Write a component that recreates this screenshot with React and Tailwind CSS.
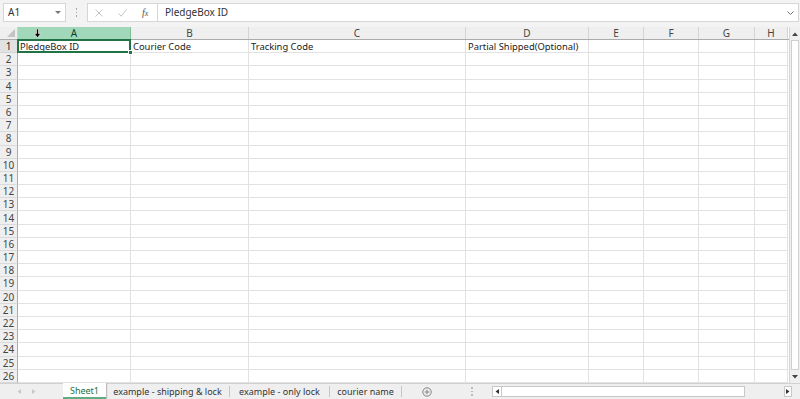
import React from 'react';

const cols = [
  { id: 'A', w: 113 },
  { id: 'B', w: 118 },
  { id: 'C', w: 217 },
  { id: 'D', w: 123 },
  { id: 'E', w: 55 },
  { id: 'F', w: 55 },
  { id: 'G', w: 56 },
  { id: 'H', w: 33 },
];

const firstRow = ['PledgeBox ID', 'Courier Code', 'Tracking Code', 'Partial Shipped(Optional)', '', '', '', ''];

const rows = Array.from({ length: 26 }, (_, i) => i + 1);

const tabs = [
  { name: 'example - shipping & lock', w: 124 },
  { name: 'example - only lock', w: 100 },
  { name: 'courier name', w: 72 },
];

const FormulaBar = () => (
  <div className="h-[27px] flex items-start pt-[3px] bg-[#f3f3f3] shrink-0">
    {/* Name box */}
    <div className="ml-[3px] w-[63px] h-[19px] bg-white border border-[#d6d6d6] flex items-center justify-between px-[4px]">
      <span className="text-[10px] text-[#333]">A1</span>
      <svg width="6" height="4" viewBox="0 0 6 4"><path d="M0 0h6L3 3z" fill="#777" /></svg>
    </div>
    <div className="w-[21px] h-[19px] flex flex-col items-center justify-center gap-[2px]">
      <span className="w-[1.5px] h-[1.5px] bg-[#aaa]" />
      <span className="w-[1.5px] h-[1.5px] bg-[#aaa]" />
      <span className="w-[1.5px] h-[1.5px] bg-[#aaa]" />
    </div>
    {/* Cancel / enter / fx */}
    <div className="w-[71px] h-[19px] bg-white border border-[#d6d6d6] flex items-center pl-[7px]">
      <svg width="8" height="8" viewBox="0 0 8 8" className="mr-[15px]">
        <path d="M0.5 0.5L7.5 7.5M7.5 0.5L0.5 7.5" stroke="#c4c4c4" strokeWidth="1" />
      </svg>
      <svg width="9" height="8" viewBox="0 0 9 8" className="mr-[15px]">
        <path d="M0.5 4.5L3.2 7.2L8.5 0.5" stroke="#c4c4c4" strokeWidth="1" fill="none" />
      </svg>
      <span className="italic text-[10px] text-[#555] font-['Liberation_Serif',serif]">f<span className="text-[8px]">x</span></span>
    </div>
    {/* Formula input */}
    <div className="flex-1 h-[19px] bg-white border border-l-0 border-[#d6d6d6] flex items-center justify-between pl-[7px] pr-[4px] mr-[1px]">
      <span className="text-[10px] text-[#333]">PledgeBox ID</span>
      <svg width="7" height="4" viewBox="0 0 7 4"><path d="M0.5 0.5L3.5 3.5L6.5 0.5" stroke="#777" fill="none" /></svg>
    </div>
  </div>
);

const HeaderRow = () => (
  <div className="h-[13px] flex shrink-0 border-b border-[#ababab]">
    <div className="w-[18px] h-full bg-[#efefef] border-r border-[#d0d0d0] flex items-end justify-end p-[2px]">
      <svg width="8" height="8" viewBox="0 0 8 8"><path d="M8 0V8H0z" fill="#c4c4c4" /></svg>
    </div>
    {cols.map((c) => (
      <div
        key={c.id}
        style={{ width: c.w }}
        className={`h-full shrink-0 flex items-center justify-center text-[10px] leading-none relative ${
          c.id === 'A'
            ? 'bg-[#a0d8b9] text-[#0f3e26] border-r border-[#7fbf9a]'
            : 'bg-[#efefef] text-[#444] border-r border-[#d4d4d4]'
        }`}
      >
        {c.id}
        {c.id === 'A' && (
          <svg width="7" height="9" viewBox="0 0 7 9" className="absolute left-[16px] top-[2px]">
            <path d="M2.5 0h2v4.5h2.2L3.5 8.8L0.3 4.5h2.2z" fill="#000" stroke="#fff" strokeWidth="0.6" />
          </svg>
        )}
      </div>
    ))}
  </div>
);

const Grid = () => (
  <div className="flex-1 flex flex-col bg-white min-w-0">
    <HeaderRow />
    {rows.map((r) => (
      <div key={r} className="h-[13.2px] flex shrink-0">
        <div
          className={`w-[18px] h-full shrink-0 flex items-center justify-center text-[10px] leading-none border-r border-b ${
            r === 1 ? 'bg-[#e2e2e2] text-[#222] border-r-[#ababab] border-b-[#d4d4d4]' : 'bg-[#efefef] text-[#444] border-r-[#ababab] border-b-[#dadada]'
          }`}
        >
          {r}
        </div>
        {cols.map((c, ci) => (
          <div
            key={c.id}
            style={{ width: c.w }}
            className="h-full shrink-0 border-r border-b border-[#e2e2e2] flex items-center text-[9.4px] text-[#222] relative"
          >
            <span className="px-[2px] pt-[1px] leading-[12px] whitespace-nowrap">{r === 1 ? firstRow[ci] : ''}</span>
            {r === 1 && ci === 0 && (
              <>
                <div className="absolute left-[-1px] top-[-1px] right-[-1px] bottom-[-1px] border-2 border-[#217346] pointer-events-none z-10" />
                <div className="absolute right-[-3px] bottom-[-3px] w-[5px] h-[5px] bg-[#217346] border border-white z-10" />
              </>
            )}
          </div>
        ))}
      </div>
    ))}
  </div>
);

const VScroll = () => (
  <div className="w-[11px] shrink-0 bg-[#f0f0f0] border-l border-[#d4d4d4] flex flex-col items-center">
    <div className="h-[13px] w-full flex items-center justify-center">
      <svg width="6" height="4" viewBox="0 0 6 4"><path d="M0 4h6L3 0.5z" fill="#444" /></svg>
    </div>
    <div className="flex-1 w-[8px] bg-white border border-[#cfcfcf]" />
    <div className="h-[13px] w-full flex items-center justify-center">
      <svg width="6" height="4" viewBox="0 0 6 4"><path d="M0 0h6L3 3.5z" fill="#444" /></svg>
    </div>
  </div>
);

const TabBar = () => (
  <div className="h-[16px] shrink-0 bg-[#efefef] border-t border-[#d0d0d0] flex items-stretch text-[9px] leading-none whitespace-nowrap">
    <div className="w-[63px] shrink-0 flex items-center pl-[17px] gap-[11px]">
      <svg width="4" height="5" viewBox="0 0 4 5"><path d="M4 0V5L0.5 2.5z" fill="#c8c8c8" /></svg>
      <svg width="4" height="5" viewBox="0 0 4 5"><path d="M0 0V5L3.5 2.5z" fill="#c8c8c8" /></svg>
    </div>
    <div className="w-[43px] shrink-0 bg-white flex items-center justify-center text-[#217346] border-b-2 border-[#5fae82] mt-[-1px] shadow-[1px_0_1px_#bbb]">
      Sheet1
    </div>
    {tabs.map((t) => (
      <div key={t.name} style={{ width: t.w }} className="shrink-0 flex items-center justify-center text-[#333] border-r border-[#c6c6c6] my-[2px]">
        {t.name}
      </div>
    ))}
    <div className="w-[50px] shrink-0 flex items-center justify-center">
      <svg width="10" height="10" viewBox="0 0 10 10">
        <circle cx="5" cy="5" r="4.2" stroke="#777" fill="none" strokeWidth="0.9" />
        <path d="M5 2.7V7.3M2.7 5H7.3" stroke="#777" strokeWidth="0.9" />
      </svg>
    </div>
    <div className="w-[40px] shrink-0 flex flex-col items-center justify-center gap-[2px]">
      <span className="w-[1.5px] h-[1.5px] bg-[#bbb]" />
      <span className="w-[1.5px] h-[1.5px] bg-[#bbb]" />
      <span className="w-[1.5px] h-[1.5px] bg-[#bbb]" />
    </div>
    <div className="flex items-center shrink-0">
      <div className="w-[10px] h-[11px] bg-white border border-[#c8c8c8] flex items-center justify-center">
        <svg width="4" height="5" viewBox="0 0 4 5"><path d="M4 0V5L0.5 2.5z" fill="#333" /></svg>
      </div>
      <div className="w-[243px] h-[11px] bg-white border border-l-0 border-[#c8c8c8]" />
      <div className="w-[39px] h-[11px]" />
      <div className="w-[8px] h-[11px] bg-white border border-[#c8c8c8] flex items-center justify-center">
        <svg width="4" height="5" viewBox="0 0 4 5"><path d="M0 0V5L3.5 2.5z" fill="#333" /></svg>
      </div>
    </div>
  </div>
);

export default function App() {
  return (
    <div className="w-[800px] h-[399px] overflow-hidden flex flex-col bg-[#f3f3f3] font-['Noto_Sans','Open_Sans',sans-serif]">
      <FormulaBar />
      <div className="flex-1 flex min-h-0">
        <Grid />
        <VScroll />
      </div>
      <TabBar />
    </div>
  );
}
